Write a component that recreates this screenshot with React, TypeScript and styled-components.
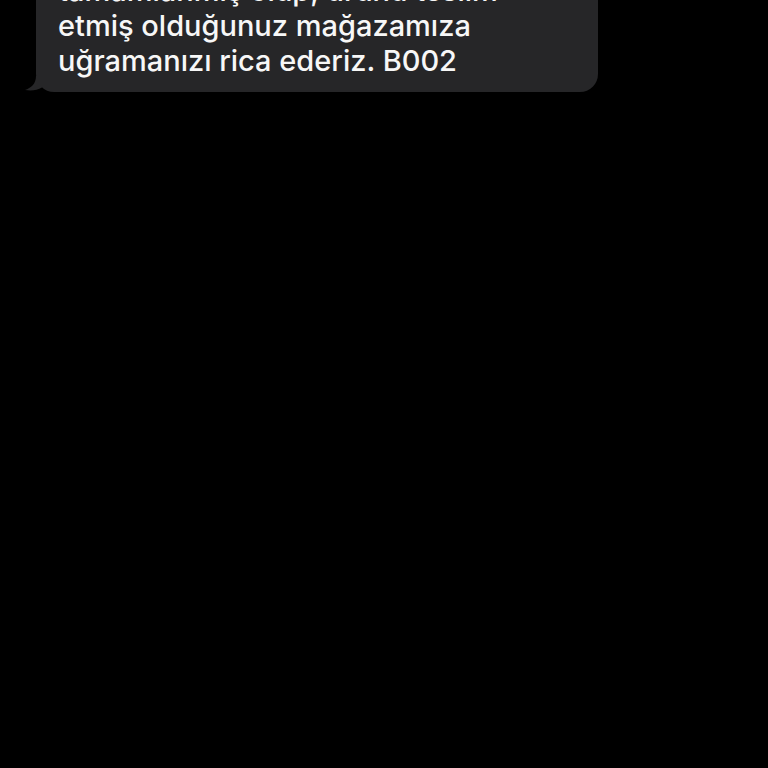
import React from 'react';
import styled, { createGlobalStyle } from 'styled-components';

const GlobalStyle = createGlobalStyle`
  html, body {
    margin: 0;
    padding: 0;
    background: #000;
    overflow: hidden;
  }
`;

const Screen = styled.div`
  width: 768px;
  height: 768px;
  background: #000;
  overflow: hidden;
  padding-left: 36px;
  box-sizing: border-box;
`;

const Bubble = styled.div`
  position: relative;
  width: 562px;
  box-sizing: border-box;
  margin-top: -37px;
  padding: 10px 14px 14px 22px;
  background: #262628;
  border-radius: 18px;
  color: #f7f7f7;
  font-family: Inter, "Noto Sans", sans-serif;
  font-weight: 500;
  font-size: 29px;
  line-height: 35px;
`;

const Tail = styled.svg`
  position: absolute;
  left: -11px;
  bottom: 0;
  width: 24px;
  height: 16px;
`;

export default function App() {
  const lines = [
    'tamamlanmış olup, ürünü teslim',
    'etmiş olduğunuz mağazamıza',
    'uğramanızı rica ederiz. B002',
  ];
  return (
    <>
      <GlobalStyle />
      <Screen>
        <Bubble>
          {lines.map((l) => (
            <div key={l}>{l}</div>
          ))}
          <Tail viewBox="0 0 24 16">
            <path d="M11 0 C11 8 6 12 0 14 C6 15 12 14.5 17 11.5 L17 0 Z" fill="#262628" />
          </Tail>
        </Bubble>
      </Screen>
    </>
  );
}
